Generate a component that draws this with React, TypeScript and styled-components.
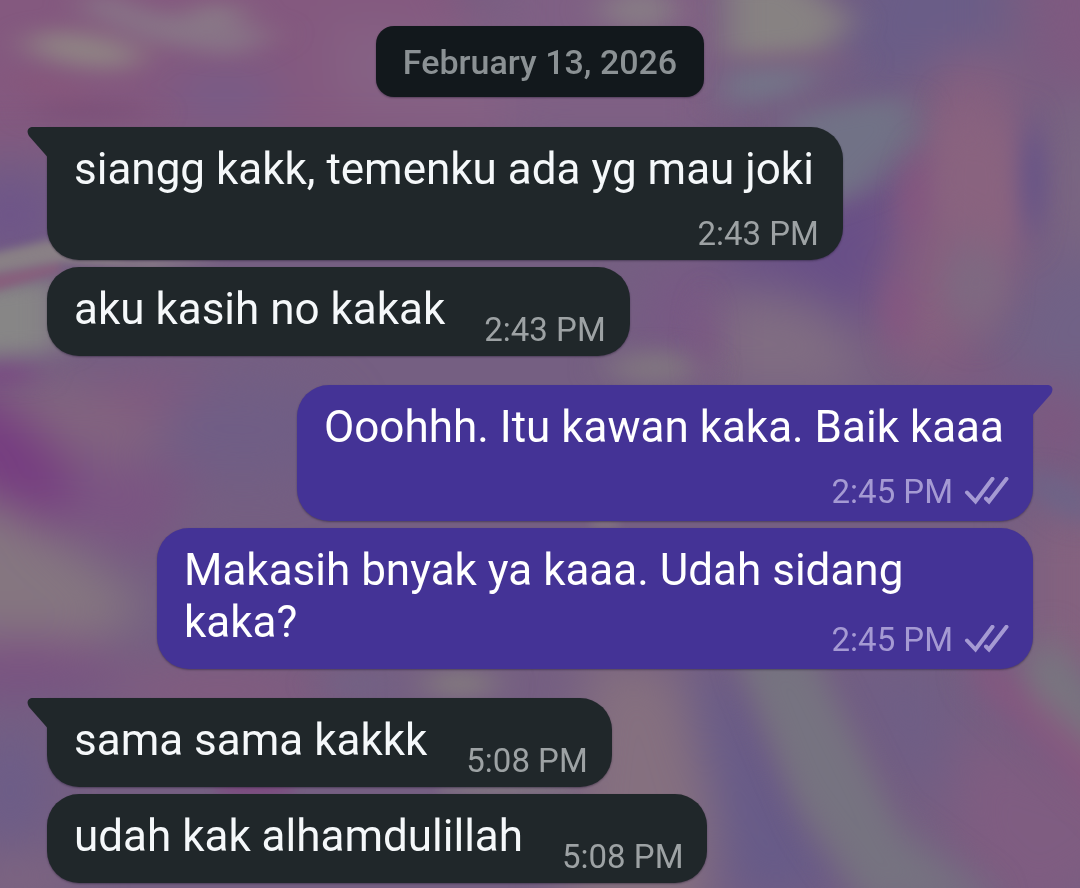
import React from "react";
import styled, { createGlobalStyle, css } from "styled-components";

type Side = "in" | "out";
type Flow = "inline" | "stacked" | "overlap";

interface Message {
  id: number;
  text: string;
  time: string;
  flow: Flow;
}

interface Group {
  side: Side;
  messages: Message[];
}

const groups: Group[] = [
  {
    side: "in",
    messages: [
      { id: 1, text: "siangg kakk, temenku ada yg mau joki", time: "2:43 PM", flow: "stacked" },
      { id: 2, text: "aku kasih no kakak", time: "2:43 PM", flow: "inline" },
    ],
  },
  {
    side: "out",
    messages: [
      { id: 3, text: "Ooohhh. Itu kawan kaka. Baik kaaa", time: "2:45 PM", flow: "stacked" },
      { id: 4, text: "Makasih bnyak ya kaaa. Udah sidang kaka?", time: "2:45 PM", flow: "overlap" },
    ],
  },
  {
    side: "in",
    messages: [
      { id: 5, text: "sama sama kakkk", time: "5:08 PM", flow: "inline" },
      { id: 6, text: "udah kak alhamdulillah", time: "5:08 PM", flow: "inline" },
    ],
  },
];

const GlobalStyle = createGlobalStyle`
  *, *::before, *::after { box-sizing: border-box; }
  body {
    margin: 0;
    background: #755f82;
    font-family: Roboto, "Liberation Sans", sans-serif;
  }
`;

const Chat = styled.main`
  position: relative;
  isolation: isolate;
  display: flex;
  flex-direction: column;
  min-height: 100vh;
  padding: 26px 47px 5px;
  overflow: hidden;
`;

const WallpaperSvg = styled.svg`
  position: absolute;
  inset: 0;
  z-index: -1;
  width: 100%;
  height: 100%;
`;

const DateChip = styled.time`
  align-self: center;
  margin-bottom: 30px;
  padding: 16px 27px 15px;
  border-radius: 18px;
  background: #12181c;
  box-shadow: 0 1px 2px rgba(20, 16, 32, 0.4);
  color: #8b9194;
  font-size: 34px;
  font-weight: 500;
  line-height: 40px;
`;

const Thread = styled.div`
  display: flex;
  flex-direction: column;
  gap: 29px;
`;

const MessageGroup = styled.ul<{ $side: Side }>`
  display: flex;
  flex-direction: column;
  align-items: ${({ $side }) => ($side === "in" ? "flex-start" : "flex-end")};
  gap: 7px;
  margin: 0;
  padding: 0;
  list-style: none;
`;

const bubbleFlow = {
  inline: css`
    align-items: flex-end;
    gap: 39px;
  `,
  stacked: css`
    flex-direction: column;
    gap: 19px;
  `,
  overlap: css`
    flex-direction: column;
  `,
};

const Bubble = styled.li<{ $side: Side; $flow: Flow; $tail: boolean }>`
  position: relative;
  display: flex;
  max-width: calc(100% - 110px);
  padding: ${({ $side }) => ($side === "in" ? "16px 24px 6px 27px" : "16px 24px 9px 27px")};
  border-radius: 32px;
  ${({ $tail, $side }) =>
    $tail && ($side === "in" ? "border-top-left-radius: 0;" : "border-top-right-radius: 0;")}
  background: ${({ $side }) => ($side === "in" ? "#20272a" : "#443396")};
  color: ${({ $side }) => ($side === "in" ? "#f5f8fa" : "#ffffff")};
  box-shadow: 0 1px 2px rgba(20, 16, 32, 0.4);
  ${({ $flow }) => bubbleFlow[$flow]}
`;

const BubbleText = styled.p<{ $flow: Flow }>`
  margin: 0;
  padding-right: ${({ $flow }) => ($flow === "inline" ? 0 : 5)}px;
  padding-bottom: ${({ $flow }) => ($flow === "inline" ? 15 : 0)}px;
  font-size: 44px;
  line-height: 52px;
`;

const Meta = styled.div<{ $side: Side; $flow: Flow }>`
  display: flex;
  align-items: center;
  align-self: flex-end;
  flex-shrink: 0;
  gap: 10px;
  margin-top: ${({ $flow }) => ($flow === "overlap" ? -28 : 0)}px;
  color: ${({ $side }) => ($side === "in" ? "#9da2a4" : "#a59ad3")};
  font-size: 33px;
  line-height: 40px;
`;

const TailSvg = styled.svg<{ $side: Side }>`
  position: absolute;
  top: 0;
  ${({ $side }) => ($side === "in" ? "left: -20px;" : "right: -20px; transform: scaleX(-1);")}
  fill: ${({ $side }) => ($side === "in" ? "#20272a" : "#443396")};
`;

const TicksSvg = styled.svg`
  fill: none;
  stroke: currentColor;
  stroke-width: 4;
  stroke-linecap: round;
`;

function Tail({ side }: { side: Side }) {
  return (
    <TailSvg $side={side} width="21" height="30" viewBox="0 0 21 30" aria-hidden="true">
      <path d="M21 0H6C1 0-1 4 2 9L20 29.500H21Z" />
    </TailSvg>
  );
}

function Ticks() {
  return (
    <TicksSvg width="46" height="30" viewBox="0 0 46 30" role="img" aria-label="Delivered">
      <path d="M4 15.500L12.500 24.500L29.500 1.800" />
      <path d="M23 21.500L26 24.500L43.500 1.800" />
    </TicksSvg>
  );
}

function Blur({ id, amount }: { id: string; amount: string }) {
  return (
    <filter
      id={id}
      filterUnits="userSpaceOnUse"
      x="-100"
      y="-100"
      width="1280"
      height="1088"
      colorInterpolationFilters="sRGB"
    >
      <feGaussianBlur stdDeviation={amount} />
    </filter>
  );
}

function Wallpaper() {
  return (
    <WallpaperSvg viewBox="0 0 1080 888" preserveAspectRatio="none" aria-hidden="true">
      <defs>
        <Blur id="wide" amount="24" />
        <Blur id="soft" amount="18 10" />
        <Blur id="tall" amount="12 20" />
        <Blur id="crisp" amount="4" />
      </defs>
      <rect width="1080" height="888" fill="#755f82" />
      <g filter="url(#wide)">
        <path d="M-100-100H430L520 150H-100Z" fill="#84597f" />
        <path d="M330 20L520 40L500 130L340 110Z" fill="#856284" />
        <path d="M500-60H720V140H500Z" fill="#7f6084" />
        <ellipse cx="225" cy="95" rx="60" ry="20" fill="#735d89" />
        <ellipse cx="10" cy="215" rx="50" ry="40" fill="#6e5589" />
        <path d="M-60 380H70L150 400L180 440L90 470L-60 480Z" fill="#82667f" />
        <path d="M60 388L200 375L260 395L150 420Z" fill="#83587f" />
        <path d="M-100 350L20 415L110 500L90 540L-20 500Z" fill="#763c80" />
        <path d="M70 450L200 470L150 560L60 530Z" fill="#7b5582" />
        <ellipse cx="250" cy="430" rx="90" ry="50" fill="#705e85" />
        <path d="M-100 480L10 505L90 560L150 610L90 645L-100 640Z" fill="#857680" />
        <ellipse cx="20" cy="665" rx="100" ry="26" fill="#7a5081" />
        <ellipse cx="10" cy="790" rx="34" ry="60" fill="#6c5d88" />
        <ellipse cx="20" cy="880" rx="60" ry="22" fill="#7f6680" />
        <ellipse cx="220" cy="690" rx="120" ry="18" fill="#875a7e" />
        <path d="M870-60H1000V55L860 95L840 50Z" fill="#6a5d87" />
        <path d="M1020-60H1140V90H1040Z" fill="#7e5a80" />
        <path d="M1055 100H1140V250H1050Z" fill="#7a6682" />
        <path d="M843 195L925 150L900 260L880 330L780 280H700V265Z" fill="#684f87" />
        <path d="M945 50L1010 60L1022 150L1020 260L950 370L900 370L880 310L910 170Z" fill="#86607f" />
        <path d="M1040 260H1140V390H980Z" fill="#716286" />
        <path d="M720 290L830 310L870 390H720Z" fill="#806d82" />
        <path d="M650 265H720V390L640 350Z" fill="#785984" />
        <path d="M950 360L1060 385L1090 440L1040 470V390L940 385Z" fill="#82547f" />
        <path d="M1030 510H1140V680H1030Z" fill="#84627f" />
        <path d="M590 655L680 670L715 820L700 930H560Z" fill="#85707f" />
        <path d="M690 660L730 670L790 790L850 900H730Z" fill="#675b88" />
        <path d="M820 660L950 665L950 790L900 780Z" fill="#6f5e85" />
        <path d="M960 730L1140 790V860L1030 930L950 850Z" fill="#7f5d81" />
      </g>
      <g filter="url(#soft)">
        <ellipse cx="84" cy="50" rx="58" ry="17" fill="#8f8284" transform="rotate(8 84 50)" />
        <path d="M95-10L150 12L280 32L235 56L160 44L80 10Z" fill="#887587" />
        <ellipse cx="218" cy="14" rx="28" ry="9" fill="#8b7f88" />
        <ellipse cx="50" cy="88" rx="40" ry="9" fill="#87567a" transform="rotate(18 50 88)" />
        <ellipse cx="90" cy="112" rx="60" ry="9" fill="#7a5078" />
        <path d="M-60 290L60 276V352L-60 358Z" fill="#878686" />
        <ellipse cx="5" cy="374" rx="30" ry="8" fill="#7a4383" />
        <ellipse cx="640" cy="10" rx="40" ry="20" fill="#877b85" />
        <path d="M725-20H800L850 20L825 50L725 56Z" fill="#878282" />
        <ellipse cx="790" cy="60" rx="70" ry="5" fill="#80607f" />
        <path d="M726 70L820 66L800 92L726 108Z" fill="#747488" />
        <path d="M790 115L905 95L920 135L865 190L810 210Z" fill="#717286" />
        <ellipse cx="655" cy="368" rx="48" ry="18" fill="#807480" />
        <path d="M1030 465L1090 500V530L1035 490Z" fill="#6a668a" />
        <ellipse cx="460" cy="684" rx="36" ry="14" fill="#837a7e" />
        <ellipse cx="360" cy="684" rx="36" ry="9" fill="#726386" />
      </g>
      <g filter="url(#tall)">
        <path d="M680-20L690 20L700 80L690-20Z" fill="#875a80" />
        <ellipse cx="915" cy="200" rx="12" ry="40" fill="#86567f" transform="rotate(8 915 200)" />
        <path d="M940 110L1010 120L1020 230L1000 250L935 220Z" fill="#89637f" />
        <ellipse cx="1033" cy="180" rx="10" ry="56" fill="#605089" />
        <ellipse cx="975" cy="285" rx="34" ry="40" fill="#7e6981" />
        <ellipse cx="898" cy="312" rx="12" ry="34" fill="#865581" />
        <ellipse cx="704" cy="345" rx="8" ry="36" fill="#7b5882" />
        <path d="M730 640L805 640L865 760L900 830L1010 910H870L800 810Z" fill="#767380" />
        <path d="M1015 655L1060 645L1120 730V790L1050 735Z" fill="#78767f" />
        <path d="M955 660L995 665L1110 765V810L1040 740Z" fill="#8b547f" />
      </g>
      <g filter="url(#crisp)">
        <path d="M-10 254L50 240L130 260H225L150 268L60 262L-10 274Z" fill="#898085" />
        <path d="M-10 276L60 264V272L-10 292Z" fill="#885f7c" />
        <ellipse cx="255" cy="790" rx="42" ry="4" fill="#80447f" />
        <ellipse cx="505" cy="790" rx="70" ry="4" fill="#837b80" />
        <ellipse cx="605" cy="524" rx="16" ry="4" fill="#84777f" />
      </g>
    </WallpaperSvg>
  );
}

export default function App() {
  return (
    <>
      <GlobalStyle />
      <Chat>
        <Wallpaper />
        <DateChip dateTime="2026-02-13">February 13, 2026</DateChip>
        <Thread>
          {groups.map(({ side, messages }) => (
            <MessageGroup key={messages[0].id} $side={side}>
              {messages.map(({ id, text, time, flow }, index) => (
                <Bubble key={id} $side={side} $flow={flow} $tail={index === 0}>
                  {index === 0 && <Tail side={side} />}
                  <BubbleText $flow={flow}>{text}</BubbleText>
                  <Meta $side={side} $flow={flow}>
                    <time>{time}</time>
                    {side === "out" && <Ticks />}
                  </Meta>
                </Bubble>
              ))}
            </MessageGroup>
          ))}
        </Thread>
      </Chat>
    </>
  );
}
